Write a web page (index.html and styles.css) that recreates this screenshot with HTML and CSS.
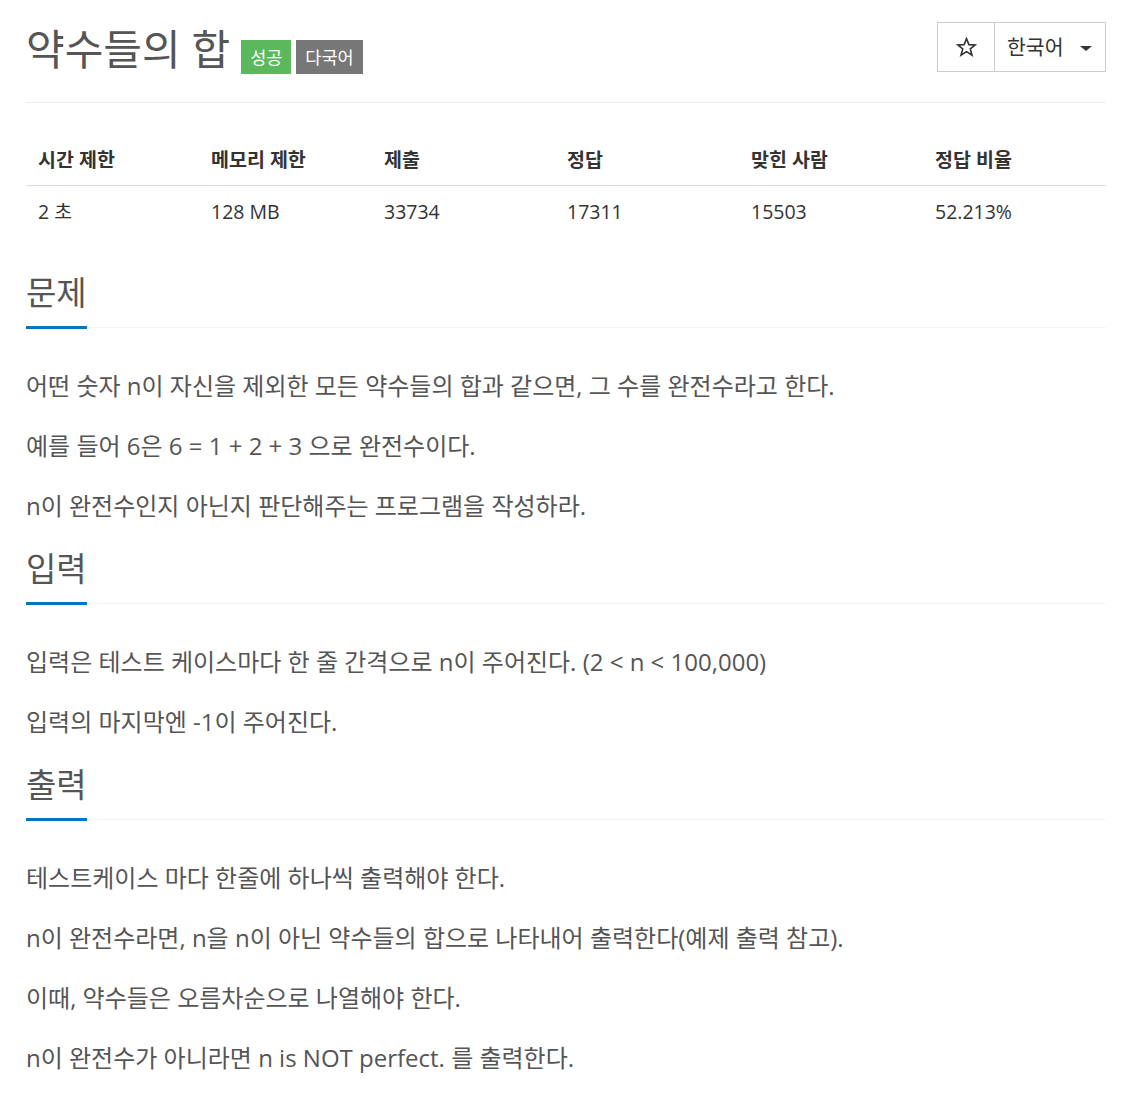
FILE: index.html
```html
<!DOCTYPE html>
<html lang="ko">
<head>
<meta charset="utf-8">
<title>약수들의 합</title>
<link rel="stylesheet" href="styles.css">
</head>
<body>
<div class="page">
  <div class="page-header">
    <h1 class="title">
      <span class="title-text">약수들의 합</span>
      <span class="label label-success">성공</span>
      <span class="label label-default">다국어</span>
    </h1>
    <div class="btn-group">
      <button class="btn btn-star" type="button" aria-label="즐겨찾기">
        <svg class="star-icon" width="21" height="20" viewBox="0 0 21 20">
          <polygon points="10.5,1.6 12.9,7.6 19.3,7.9 14.3,11.9 16,18.2 10.5,14.6 5,18.2 6.7,11.9 1.7,7.9 8.1,7.6" fill="none" stroke="#333" stroke-width="1.6" stroke-linejoin="miter"/>
        </svg>
      </button>
      <button class="btn btn-lang" type="button">
        <span class="lang-text">한국어</span>
        <span class="caret"></span>
      </button>
    </div>
  </div>

  <table class="info-table">
    <thead>
      <tr>
        <th>시간 제한</th>
        <th>메모리 제한</th>
        <th>제출</th>
        <th>정답</th>
        <th>맞힌 사람</th>
        <th>정답 비율</th>
      </tr>
    </thead>
    <tbody>
      <tr>
        <td>2 초</td>
        <td>128 MB</td>
        <td>33734</td>
        <td>17311</td>
        <td>15503</td>
        <td>52.213%</td>
      </tr>
    </tbody>
  </table>

  <section class="problem-section first">
    <div class="headline"><h2>문제</h2></div>
    <div class="problem-text">
      <p>어떤 숫자 n이 자신을 제외한 모든 약수들의 합과 같으면, 그 수를 완전수라고 한다.</p>
      <p>예를 들어 6은 6 = 1 + 2 + 3 으로 완전수이다.</p>
      <p>n이 완전수인지 아닌지 판단해주는 프로그램을 작성하라.</p>
    </div>
  </section>

  <section class="problem-section">
    <div class="headline"><h2>입력</h2></div>
    <div class="problem-text">
      <p>입력은 테스트 케이스마다 한 줄 간격으로 n이 주어진다. (2 &lt; n &lt; 100,000)</p>
      <p>입력의 마지막엔 -1이 주어진다.</p>
    </div>
  </section>

  <section class="problem-section">
    <div class="headline"><h2>출력</h2></div>
    <div class="problem-text">
      <p>테스트케이스 마다 한줄에 하나씩 출력해야 한다.</p>
      <p>n이 완전수라면, n을 n이 아닌 약수들의 합으로 나타내어 출력한다(예제 출력 참고).</p>
      <p>이때, 약수들은 오름차순으로 나열해야 한다.</p>
      <p>n이 완전수가 아니라면 n is NOT perfect. 를 출력한다.</p>
    </div>
  </section>
</div>
</body>
</html>
```

FILE: styles.css
```css
html, body {
  margin: 0;
  padding: 0;
  background: #fff;
}

body {
  font-family: "Open Sans", "Noto Sans CJK KR", sans-serif;
  color: #555;
}

.page {
  padding: 22px 31px 40px 26px;
}

/* ---------- header ---------- */
.page-header {
  display: flex;
  justify-content: space-between;
  align-items: flex-start;
  padding-bottom: 26px;
  border-bottom: 1px solid #eee;
}

.title {
  margin: 0;
  display: flex;
  align-items: flex-start;
  font-size: 42px;
  font-weight: 400;
  line-height: 54px;
  color: #555;
}

.label {
  display: inline-block;
  margin-top: 18px;
  height: 34px;
  line-height: 34px;
  padding: 0 9px;
  font-size: 17.5px;
  color: #fff;
  white-space: nowrap;
}

.label-success {
  margin-left: 11px;
  background: #5cb85c;
}

.label-default {
  margin-left: 5px;
  background: #777;
}

.btn-group {
  display: flex;
}

.btn {
  display: flex;
  align-items: center;
  height: 50px;
  margin: 0;
  background: #fff;
  border: 1px solid #ccc;
  font-family: "Open Sans", "Noto Sans CJK KR", sans-serif;
  color: #333;
  cursor: pointer;
}

.btn-star {
  width: 58px;
  justify-content: center;
  padding: 0;
}

.star-icon {
  display: block;
}

.btn-lang {
  width: 112px;
  margin-left: -1px;
  padding: 0 13px 0 12px;
  font-size: 20.5px;
  justify-content: space-between;
}

.lang-text {
  line-height: 26px;
}

.caret {
  width: 0;
  height: 0;
  border-top: 5px solid #333;
  border-left: 6px solid transparent;
  border-right: 6px solid transparent;
  margin-top: 2px;
}

/* ---------- info table ---------- */
.info-table {
  width: 100%;
  margin-top: 32px;
  border-collapse: collapse;
  table-layout: fixed;
  font-size: 19.5px;
  line-height: 26px;
  color: #333;
}

.info-table th,
.info-table td {
  box-sizing: border-box;
  text-align: left;
  padding: 12px;
  vertical-align: top;
}

.info-table th {
  font-weight: 700;
  border-bottom: 1px solid #ddd;
}

.info-table td {
  padding: 13px 12px 11px;
}

.info-table th:nth-child(1) { width: 173px; }
.info-table th:nth-child(2) { width: 173px; }
.info-table th:nth-child(3) { width: 183px; }
.info-table th:nth-child(4) { width: 184px; }
.info-table th:nth-child(5) { width: 184px; }

/* ---------- sections ---------- */
.problem-section.first {
  margin-top: 39px;
}

.headline {
  border-bottom: 1px dotted #e4e9f0;
  margin-bottom: 43px;
}

.headline h2 {
  display: inline-block;
  margin: 0 0 -2px 0;
  padding-bottom: 15px;
  border-bottom: 3px solid #0076c0;
  font-size: 33px;
  font-weight: 400;
  line-height: 36px;
  color: #555;
}

.problem-text {
  font-size: 24px;
  line-height: 30px;
}

.problem-text p {
  margin: 0 0 30px 0;
}
```
